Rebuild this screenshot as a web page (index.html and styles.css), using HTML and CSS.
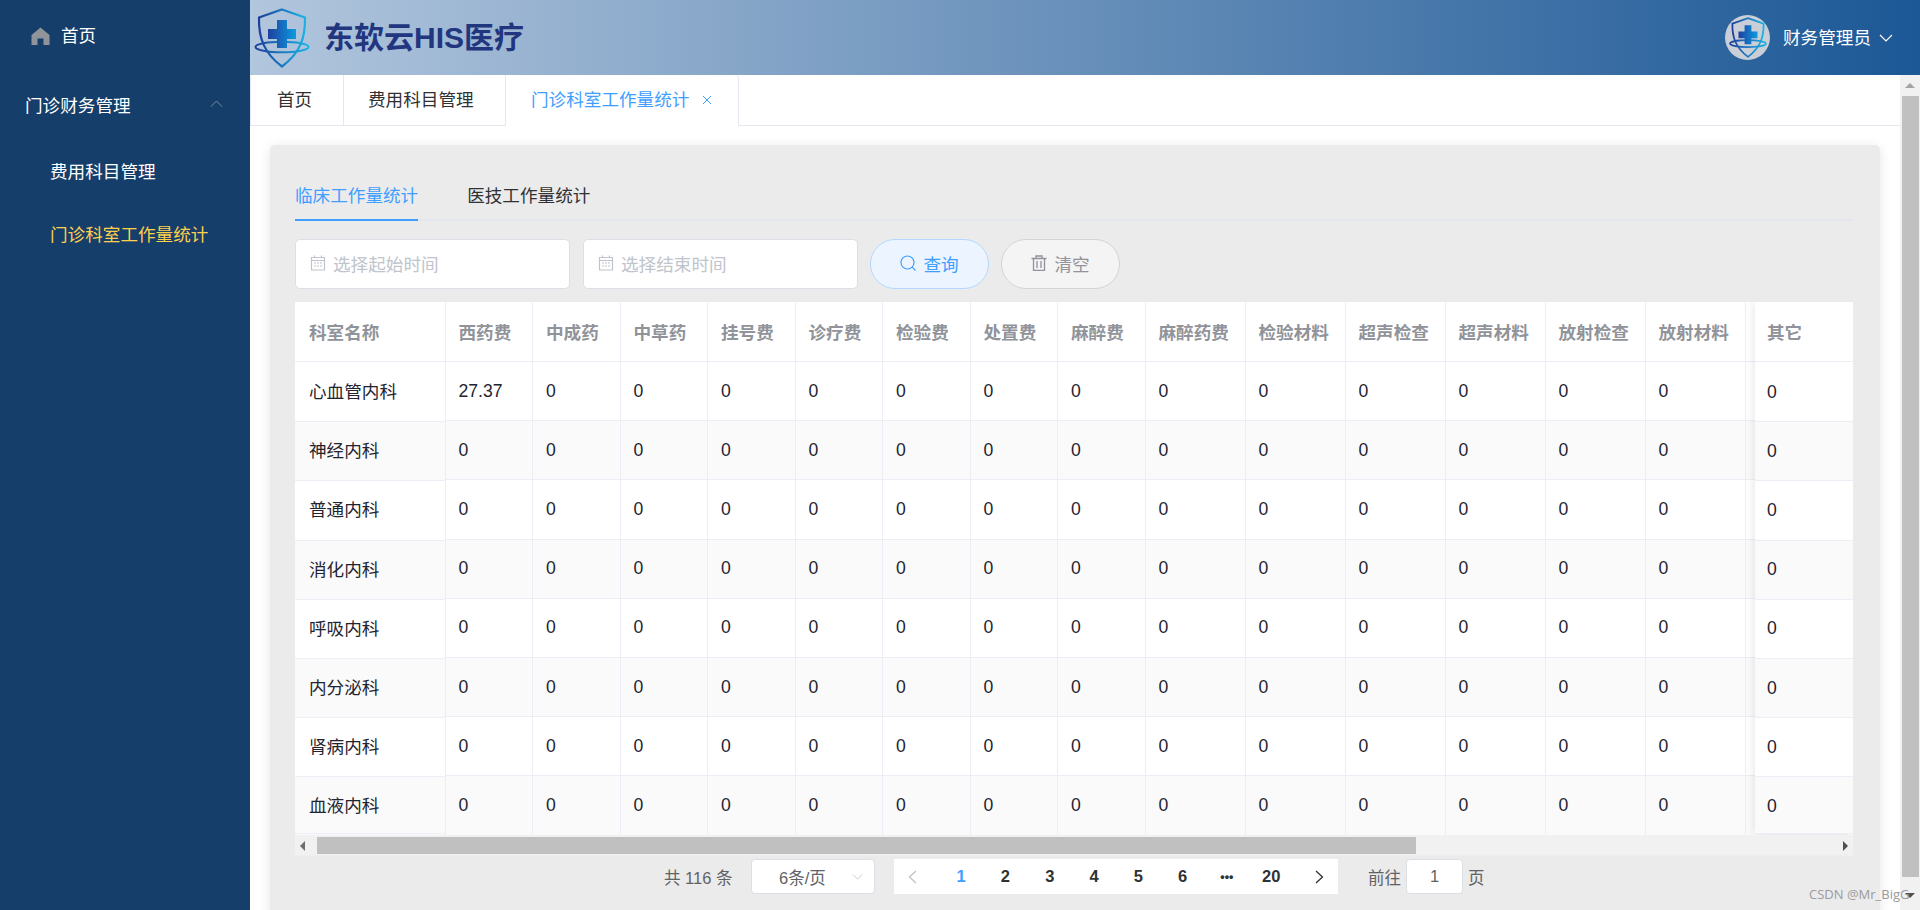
FILE: index.html
```html
<!DOCTYPE html>
<html lang="zh-CN">
<head>
<meta charset="utf-8">
<title>东软云HIS医疗</title>
<link rel="stylesheet" href="styles.css">
</head>
<body>
<aside class="sidebar">
  <a class="menu-item home">
    <svg class="home-icon" viewBox="0 0 18 18"><path d="M9 0.5 L18 8 V18 H12 V11.5 H6 V18 H0 V8 Z" fill="#909399"/></svg>
    <span>首页</span>
  </a>
  <a class="menu-item group">
    <span>门诊财务管理</span>
    <svg class="chev" viewBox="0 0 12 7"><path d="M0.5 6.5 L6 1 L11.500 6.500" fill="none" stroke="#7d8ea5" stroke-width="1"/></svg>
  </a>
  <a class="menu-item sub">费用科目管理</a>
  <a class="menu-item sub active">门诊科室工作量统计</a>
</aside>
<div class="main">
  <header class="topbar">
    <div class="brand">
      <svg class="logo" viewBox="0 0 56 60">
        <defs>
          <linearGradient id="lg" x1="0" y1="0" x2="1" y2="0"><stop offset="0" stop-color="#1d3f9c"/><stop offset="1" stop-color="#18b4e4"/></linearGradient>
          <linearGradient id="lc" x1="0" y1="0" x2="1" y2="0"><stop offset="0" stop-color="#1f3f9f"/><stop offset="1" stop-color="#0c9be0"/></linearGradient>
        </defs>
        <path d="M28 1.500 L51 9.500 C51.500 30 46 45 28 58.500 C10 45 4.500 30 5 9.500 Z" fill="none" stroke="url(#lg)" stroke-width="2.200"/>
        <ellipse cx="28" cy="39" rx="26.500" ry="5.200" fill="none" stroke="url(#lg)" stroke-width="2"/>
        <path d="M23 12 H33 V21 H42 V31 H33 V40 H23 V31 H14 V21 H23 Z" fill="url(#lc)"/>
      </svg>
      <span class="brand-name">东软云HIS医疗</span>
    </div>
    <div class="user">
      <span class="avatar">
        <svg class="avatar-logo" viewBox="0 0 56 60">
          <path d="M28 1.500 L51 9.500 C51.500 30 46 45 28 58.500 C10 45 4.500 30 5 9.500 Z" fill="none" stroke="url(#lg)" stroke-width="2.600"/>
          <ellipse cx="28" cy="39" rx="26.500" ry="5.200" fill="none" stroke="url(#lg)" stroke-width="2.400"/>
          <path d="M23 12 H33 V21 H42 V31 H33 V40 H23 V31 H14 V21 H23 Z" fill="url(#lc)"/>
        </svg>
      </span>
      <span class="user-name">财务管理员</span>
      <svg class="user-chev" viewBox="0 0 14 8"><path d="M1 1 L7 7 L13 1" fill="none" stroke="#fff" stroke-width="1.200"/></svg>
    </div>
  </header>
  <div class="body-row">
    <div class="page">
      <nav class="tabs">
        <a class="tab t-home">首页</a>
        <a class="tab t-fee">费用科目管理</a>
        <a class="tab t-work active">门诊科室工作量统计<svg class="close" viewBox="0 0 10 10"><path d="M1 1 L9 9 M9 1 L1 9" fill="none" stroke="#409eff" stroke-width="1"/></svg></a>
      </nav>
      <section class="card">
        <div class="ctabs">
          <a class="ctab active">临床工作量统计</a>
          <a class="ctab">医技工作量统计</a>
        </div>
        <div class="filters">
          <div class="field">
            <svg class="cal" viewBox="0 0 16 16"><path d="M1.500 2.500 H14.500 V15 H1.500 Z M1.500 5.500 H14.500 M4.500 0.500 V3 M11.500 0.500 V3" fill="none" stroke="#c0c4cc" stroke-width="1.200"/><path d="M4 8 H6 M7 8 H9 M10 8 H12 M4 11 H6 M7 11 H9 M10 11 H12" stroke="#c0c4cc" stroke-width="1.200"/></svg>
            <span>选择起始时间</span>
          </div>
          <div class="field">
            <svg class="cal" viewBox="0 0 16 16"><path d="M1.500 2.500 H14.500 V15 H1.500 Z M1.500 5.500 H14.500 M4.500 0.500 V3 M11.500 0.500 V3" fill="none" stroke="#c0c4cc" stroke-width="1.200"/><path d="M4 8 H6 M7 8 H9 M10 8 H12 M4 11 H6 M7 11 H9 M10 11 H12" stroke="#c0c4cc" stroke-width="1.200"/></svg>
            <span>选择结束时间</span>
          </div>
          <button class="btn btn-query">
            <svg class="btn-icon" viewBox="0 0 16 16"><circle cx="7.500" cy="7.500" r="6.500" fill="none" stroke="#409eff" stroke-width="1.200"/><path d="M12.200 12.200 L15.500 15.500" stroke="#409eff" stroke-width="1.200"/></svg>
            <span>查询</span>
          </button>
          <button class="btn btn-clear">
            <svg class="btn-icon" viewBox="0 0 16 16"><path d="M0.500 3.500 H15.500 M5 3.500 V1 H11 V3.500 M2.500 3.500 V15.500 H13.500 V3.500 M6 6 V13 M10 6 V13" fill="none" stroke="#909399" stroke-width="1.300"/></svg>
            <span>清空</span>
          </button>
        </div>
        <div class="table-wrap">
          <table class="grid main-table">
            <colgroup>
              <col class="c-name"><col class="c-s"><col class="c-s"><col class="c-s"><col class="c-s"><col class="c-s"><col class="c-s"><col class="c-s"><col class="c-s"><col class="c-l"><col class="c-l"><col class="c-l"><col class="c-l"><col class="c-l"><col class="c-l"><col class="c-l">
            </colgroup>
            <thead>
              <tr><th></th><th>西药费</th><th>中成药</th><th>中草药</th><th>挂号费</th><th>诊疗费</th><th>检验费</th><th>处置费</th><th>麻醉费</th><th>麻醉药费</th><th>检验材料</th><th>超声检查</th><th>超声材料</th><th>放射检查</th><th>放射材料</th><th></th></tr>
            </thead>
            <tbody>
              <tr><td></td><td>27.37</td><td>0</td><td>0</td><td>0</td><td>0</td><td>0</td><td>0</td><td>0</td><td>0</td><td>0</td><td>0</td><td>0</td><td>0</td><td>0</td><td></td></tr>
              <tr><td></td><td>0</td><td>0</td><td>0</td><td>0</td><td>0</td><td>0</td><td>0</td><td>0</td><td>0</td><td>0</td><td>0</td><td>0</td><td>0</td><td>0</td><td></td></tr>
              <tr><td></td><td>0</td><td>0</td><td>0</td><td>0</td><td>0</td><td>0</td><td>0</td><td>0</td><td>0</td><td>0</td><td>0</td><td>0</td><td>0</td><td>0</td><td></td></tr>
              <tr><td></td><td>0</td><td>0</td><td>0</td><td>0</td><td>0</td><td>0</td><td>0</td><td>0</td><td>0</td><td>0</td><td>0</td><td>0</td><td>0</td><td>0</td><td></td></tr>
              <tr><td></td><td>0</td><td>0</td><td>0</td><td>0</td><td>0</td><td>0</td><td>0</td><td>0</td><td>0</td><td>0</td><td>0</td><td>0</td><td>0</td><td>0</td><td></td></tr>
              <tr><td></td><td>0</td><td>0</td><td>0</td><td>0</td><td>0</td><td>0</td><td>0</td><td>0</td><td>0</td><td>0</td><td>0</td><td>0</td><td>0</td><td>0</td><td></td></tr>
              <tr><td></td><td>0</td><td>0</td><td>0</td><td>0</td><td>0</td><td>0</td><td>0</td><td>0</td><td>0</td><td>0</td><td>0</td><td>0</td><td>0</td><td>0</td><td></td></tr>
              <tr><td></td><td>0</td><td>0</td><td>0</td><td>0</td><td>0</td><td>0</td><td>0</td><td>0</td><td>0</td><td>0</td><td>0</td><td>0</td><td>0</td><td>0</td><td></td></tr>
            </tbody>
          </table>
          <div class="fixed fixed-left">
            <table class="grid">
              <thead><tr><th>科室名称</th></tr></thead>
              <tbody>
                <tr><td>心血管内科</td></tr>
                <tr><td>神经内科</td></tr>
                <tr><td>普通内科</td></tr>
                <tr><td>消化内科</td></tr>
                <tr><td>呼吸内科</td></tr>
                <tr><td>内分泌科</td></tr>
                <tr><td>肾病内科</td></tr>
                <tr><td>血液内科</td></tr>
              </tbody>
            </table>
          </div>
          <div class="fixed fixed-right">
            <table class="grid">
              <thead><tr><th>其它</th></tr></thead>
              <tbody>
                <tr><td>0</td></tr>
                <tr><td>0</td></tr>
                <tr><td>0</td></tr>
                <tr><td>0</td></tr>
                <tr><td>0</td></tr>
                <tr><td>0</td></tr>
                <tr><td>0</td></tr>
                <tr><td>0</td></tr>
              </tbody>
            </table>
          </div>
        </div>
        <div class="hscroll">
          <i class="arrow-left"></i>
          <i class="hthumb"></i>
          <i class="arrow-right"></i>
        </div>
        <div class="pagination">
          <span class="total">共 116 条</span>
          <div class="size-select">
            <span>6条/页</span>
            <svg class="size-chev" viewBox="0 0 12 7"><path d="M0.500 0.500 L6 6 L11.500 0.500" fill="none" stroke="#c0c4cc" stroke-width="1"/></svg>
          </div>
          <div class="pager">
            <span class="pg-nav pg-prev"><svg viewBox="0 0 9 14"><path d="M8 1 L1.500 7 L8 13" fill="none" stroke="#c0c4cc" stroke-width="1.400"/></svg></span>
            <span class="pg current">1</span>
            <span class="pg">2</span>
            <span class="pg">3</span>
            <span class="pg">4</span>
            <span class="pg">5</span>
            <span class="pg">6</span>
            <span class="pg dots">•••</span>
            <span class="pg">20</span>
            <span class="pg-nav pg-next"><svg viewBox="0 0 9 14"><path d="M1 1 L7.500 7 L1 13" fill="none" stroke="#303133" stroke-width="1.300"/></svg></span>
          </div>
          <span class="goto">前往</span>
          <div class="page-input">1</div>
          <span class="goto-end">页</span>
        </div>
      </section>
    </div>
    <div class="vscroll">
      <i class="arrow-up"></i>
      <i class="vthumb"></i>
      <i class="arrow-down"></i>
    </div>
  </div>
</div>
<div class="watermark">CSDN @Mr_BigG</div>
</body>
</html>
```

FILE: styles.css
```css
* { box-sizing: border-box; }
html, body { height: 100%; }
body {
  margin: 0;
  display: flex;
  height: 910px;
  overflow: hidden;
  background: #fff;
  font-family: "Liberation Sans", "Noto Sans CJK SC", sans-serif;
  font-size: 17.6px;
  color: #303133;
}
.sidebar {
  width: 250px;
  flex: none;
  background: #153e6a;
  color: #fff;
  padding-top: 3px;
}
.menu-item { display: flex; align-items: center; height: 63px; }
.home { padding-left: 31px; }
.home-icon { width: 19px; height: 18px; margin: 2px 11px 0 0; }
.group { padding: 0 27px 0 25px; justify-content: space-between; margin-top: 4px; height: 69px; }
.chev { width: 13px; height: 7px; margin-top: -3px; }
.sub { padding-left: 50px; }
.active.sub { color: #ffd04b; }
.main { flex: 1; display: flex; flex-direction: column; min-width: 0; }
.topbar {
  height: 75px;
  flex: none;
  display: flex;
  justify-content: space-between;
  align-items: center;
  background: linear-gradient(90deg, #b2c6dd 0%, #1c5896 100%);
}
.brand { display: flex; align-items: center; padding-left: 4px; }
.logo { width: 56px; height: 60px; }
.brand-name {
  margin: -5px 0 0 14px;
  font-size: 30px;
  font-weight: 700;
  color: #22367f;
}
.user { display: flex; align-items: center; padding-right: 27px; color: #fff; }
.avatar {
  width: 45px;
  height: 45px;
  border-radius: 50%;
  background: #c9ced7;
  display: flex;
  align-items: center;
  justify-content: center;
}
.avatar-logo { width: 38px; height: 41px; }
.user-name { margin: -2px 0 0 13px; }
.user-chev { width: 14px; height: 8px; margin-left: 8px; }
.body-row { flex: 1; display: flex; min-height: 0; }
.page { flex: 1; min-width: 0; }
.tabs {
  height: 51px;
  display: flex;
  border-bottom: 1px solid #e4e7ed;
}
.tab {
  display: flex;
  align-items: center;
  height: 51px;
  padding-bottom: 3px;
  border-right: 1px solid #e4e7ed;
  border-bottom: 1px solid #e4e7ed;
  background: #fff;
}
.t-home { width: 94px; padding-left: 26px; border-left: 1px solid #e4e7ed; border-radius: 4px 0 0 0; }
.t-fee { width: 162px; padding-left: 24px; }
.t-work {
  width: 233px;
  padding-left: 25px;
  color: #409eff;
  border-radius: 0 4px 0 0;
  border-bottom-color: #fff;
}
.close { width: 10px; height: 10px; margin: 2px 0 0 13px; }
.card {
  margin: 19px 20px 0 19.5px;
  height: 800px;
  padding: 25px 27px 0 25.5px;
  background: #ebebeb;
  border-radius: 5px;
  box-shadow: 0 2px 12px rgba(0, 0, 0, 0.1);
}
.ctabs {
  height: 51px;
  display: flex;
  gap: 49px;
  border-bottom: 2px solid #e4e7ed;
}
.ctab {
  height: 51px;
  padding-top: 3px;
  line-height: 46px;
  border-bottom: 2px solid transparent;
}
.ctab.active { color: #409eff; border-bottom-color: #409eff; }
.filters { display: flex; gap: 13px; margin-top: 18px; }
.field {
  width: 275px;
  height: 50px;
  display: flex;
  align-items: center;
  padding: 0 0 2px 14px;
  background: #fff;
  border: 1px solid #dcdfe6;
  border-radius: 5px;
  color: #c0c4cc;
}
.cal { width: 16px; height: 16px; margin-right: 7px; }
.btn {
  width: 119px;
  height: 50px;
  display: flex;
  align-items: center;
  justify-content: center;
  gap: 7px;
  border-radius: 25px;
  font: inherit;
  padding: 0 0 2px;
}
.btn-icon { width: 16px; height: 16px; }
.btn-query { background: #ecf5ff; border: 1px solid #b3d8ff; color: #409eff; margin-left: -1px; }
.btn-clear { background: #f4f4f5; border: 1px solid #d3d4d6; color: #909399; margin-left: -1px; }
.table-wrap {
  position: relative;
  margin-top: 13px;
  height: 533px;
  overflow: hidden;
  background: #fff;
}
.grid {
  border-collapse: separate;
  border-spacing: 0;
  table-layout: fixed;
  width: 100%;
}
.main-table { width: 1550.5px; }
.c-name { width: 150.5px; }
.c-s { width: 87.5px; }
.c-l { width: 100px; }
.grid th, .grid td {
  padding: 0 0 0 13px;
  text-align: left;
  border-right: 1px solid #ebeef5;
  border-bottom: 1px solid #ebeef5;
  white-space: nowrap;
  overflow: hidden;
  color: #1f2430;
  font-weight: 400;
}
.grid th { color: #909399; font-weight: 700; height: 60px; }
.grid td { height: 59.2px; }
.grid tbody tr:nth-child(even) td { background: #fafafa; }
.fixed {
  position: absolute;
  top: 0;
  height: 532px;
  overflow: hidden;
  background: #fff;
  border-bottom: 1px solid #ebeef5;
}
.fixed tbody tr:first-child td { height: 60.2px; padding-top: 1px; }
.fixed-left { left: 0; width: 150.5px; }
.fixed-left th, .fixed-left td { padding-left: 14px; }
.fixed-left td { padding-bottom: 3px; }
.fixed-left tbody tr:first-child td { padding-top: 0; padding-bottom: 2px; }
.fixed-right {
  right: 0;
  width: 98px;
  overflow: visible;
  box-shadow: 0 0 10px rgba(0, 0, 0, 0.12);
}
.fixed-right .grid { display: block; height: 531px; overflow: hidden; }
.fixed-right thead, .fixed-right tbody, .fixed-right tr { display: block; }
.fixed-right th, .fixed-right td { display: flex; align-items: center; width: 98px; border-right: 0; padding-left: 12px; }
.hscroll {
  height: 21px;
  display: flex;
  align-items: flex-end;
  background: #f1f1f1;
  position: relative;
  border-bottom: 1px solid #eceef3;
}
.hthumb { width: 1099px; height: 17px; margin: 0 0 1px 12px; background: #c0c0c0; }
.arrow-left {
  width: 0;
  height: 0;
  margin: 0 0 4px 5px;
  border: 5px solid transparent;
  border-left-width: 0;
  border-right-color: #6e6e6e;
}
.arrow-right {
  width: 0;
  height: 0;
  margin: 0 5px 4px auto;
  border: 5px solid transparent;
  border-right-width: 0;
  border-left-color: #505050;
}
.pagination {
  display: flex;
  align-items: center;
  height: 35px;
  margin-top: 3px;
  padding-left: 369px;
  font-size: 16.5px;
  color: #606266;
}
.total { width: 68px; white-space: nowrap; }
.size-select {
  width: 124px;
  height: 35px;
  margin-left: 19px;
  display: flex;
  align-items: center;
  justify-content: space-between;
  padding: 0 6px 0 27px;
  background: #fff;
  border: 1px solid #dcdfe6;
  border-radius: 4px;
}
.size-chev { width: 11px; height: 6px; margin-right: 5px; }
.pager {
  width: 444px;
  height: 35px;
  margin-left: 19px;
  display: flex;
  align-items: center;
  background: #fff;
  color: #303133;
  font-weight: 700;
}
.pg { width: 44.3px; text-align: center; flex: none; }
.pg.current { color: #409eff; }
.pg.dots { font-size: 12.5px; }
.pg-nav { width: 36px; display: flex; justify-content: center; flex: none; }
.pg-nav svg { width: 9px; height: 14px; }
.pg-prev { margin-right: 9px; }
.pg-next { margin-left: 8px; }
.goto { margin-left: 30px; }
.page-input {
  width: 57px;
  height: 35px;
  margin: 0 5px;
  line-height: 33px;
  text-align: center;
  background: #fff;
  border: 1px solid #dcdfe6;
  border-radius: 4px;
}
.vscroll {
  width: 20px;
  flex: none;
  display: flex;
  flex-direction: column;
  align-items: center;
  background: #f1f1f1;
  position: relative;
  padding-top: 8px;
}
.vthumb { width: 17px; height: 781px; margin-top: 8px; background: #c0c0c0; }
.arrow-up {
  width: 0;
  height: 0;
  border: 5px solid transparent;
  border-top-width: 0;
  border-bottom-color: #a3a3a3;
}
.arrow-down {
  width: 0;
  height: 0;
  margin-top: 16px;
  border: 5px solid transparent;
  border-bottom-width: 0;
  border-top-color: #505050;
}
.watermark {
  position: absolute;
  left: 1809px;
  top: 885px;
  font-family: "Open Sans", sans-serif;
  font-size: 13px;
  color: #9a9a9a;
  white-space: nowrap;
}
```
